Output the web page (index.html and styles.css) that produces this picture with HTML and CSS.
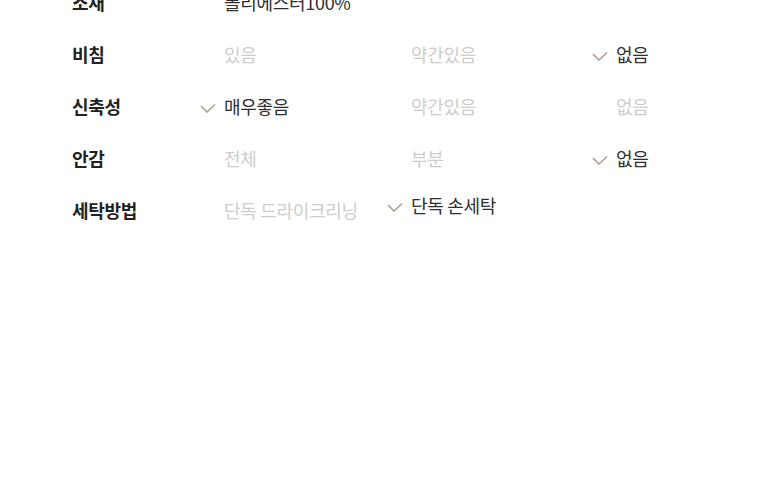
FILE: index.html
```html
<!DOCTYPE html>
<html>
<head>
    <title>상품 정보</title>
    <link rel="stylesheet" href="styles.css">
</head>
<body>
    <div class="spec">
        <div class="spec-row">
            <div class="spec-label">소재</div>
            <div class="spec-item on wide">폴리에스터100%</div>
        </div>
        <div class="spec-row">
            <div class="spec-label">비침</div>
            <div class="spec-item">있음</div>
            <div class="spec-item">약간있음</div>
            <div class="spec-item on"><svg class="check" viewBox="0 0 16 10"><polyline points="1,3 7,9 15,1.5"/></svg>없음</div>
        </div>
        <div class="spec-row">
            <div class="spec-label">신축성</div>
            <div class="spec-item on"><svg class="check" viewBox="0 0 16 10"><polyline points="1,3 7,9 15,1.5"/></svg>매우좋음</div>
            <div class="spec-item">약간있음</div>
            <div class="spec-item">없음</div>
        </div>
        <div class="spec-row">
            <div class="spec-label">안감</div>
            <div class="spec-item">전체</div>
            <div class="spec-item">부분</div>
            <div class="spec-item on"><svg class="check" viewBox="0 0 16 10"><polyline points="1,3 7,9 15,1.5"/></svg>없음</div>
        </div>
        <div class="spec-row">
            <div class="spec-label">세탁방법</div>
            <div class="spec-item">단독 드라이크리닝</div>
            <div class="spec-item on raised"><svg class="check" viewBox="0 0 16 10"><polyline points="1,3 7,9 15,1.5"/></svg>단독 손세탁</div>
        </div>
    </div>
</body>
</html>
```

FILE: styles.css
```css
body {
    margin: 0;
    padding: 0;
    background-color: #fff;
    font-family: "Noto Sans CJK KR", "Noto Sans", sans-serif;
    color: #222;
}

.spec {
    margin-top: -24px;
    padding-left: 72px;
}

.spec-row {
    display: grid;
    grid-template-columns: 152px 187px 205px auto;
    align-items: center;
    height: 52px;
}

.spec-label {
    font-size: 18px;
    font-weight: 700;
    letter-spacing: -0.3px;
    color: #222;
}

.spec-item {
    display: flex;
    align-items: center;
    font-size: 18px;
    letter-spacing: -0.3px;
    color: #cdcdcd;
    white-space: nowrap;
}

.spec-item.on {
    color: #2e2e2e;
}

.spec-item.wide {
    grid-column: 2 / 5;
}

.spec-item.raised {
    margin-top: -10px;
}

.check {
    width: 16px;
    height: 10px;
    margin-left: -24px;
    margin-right: 8px;
    margin-top: 4px;
    fill: none;
    stroke: #ab9f8f;
    stroke-width: 1.6;
}
```
